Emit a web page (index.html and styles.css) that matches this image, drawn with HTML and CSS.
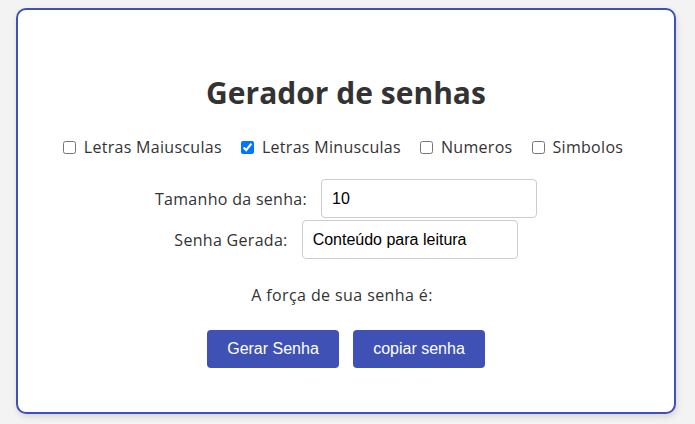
FILE: index.html
```html
<!DOCTYPE html>
<html lang="pt-BR">
<head>
<meta charset="utf-8">
<title>Gerador de senhas</title>
<link rel="stylesheet" href="styles.css">
</head>
<body>
<main class="card">
  <h1 class="title">Gerador de senhas</h1>
  <div class="options">
    <label class="option"><input type="checkbox" class="check">Letras Maiusculas</label>
    <label class="option"><input type="checkbox" class="check" checked>Letras Minusculas</label>
    <label class="option"><input type="checkbox" class="check">Numeros</label>
    <label class="option"><input type="checkbox" class="check">Simbolos</label>
  </div>
  <div class="fields">
    <div class="field">
      <label class="field-label" for="tamanho">Tamanho da senha:</label>
      <input id="tamanho" class="text-input" type="text" value="10">
    </div>
    <div class="field">
      <label class="field-label" for="senha">Senha Gerada:</label>
      <input id="senha" class="text-input" type="text" value="Conteúdo para leitura" readonly>
    </div>
  </div>
  <p class="strength">A força de sua senha é:<span class="strength-value"></span></p>
  <div class="actions">
    <button class="btn" type="button">Gerar Senha</button>
    <button class="btn" type="button">copiar senha</button>
  </div>
</main>
</body>
</html>
```
FILE: styles.css
```css
* {
  box-sizing: border-box;
}

html, body {
  margin: 0;
  height: 100%;
}

body {
  background: #f3f3f3;
  padding: 8px 19px 10px 16px;
  font-family: "Open Sans", "Noto Sans", "Liberation Sans", sans-serif;
  color: #333;
  overflow: hidden;
}

.card {
  height: 406px;
  background: #fff;
  border: 2px solid #3f51b5;
  border-radius: 10px;
  box-shadow: 1px 3px 6px rgba(0, 0, 0, 0.12);
  display: flex;
  flex-direction: column;
  align-items: center;
  padding-top: 63px;
}

.title {
  margin: 0;
  font-size: 30px;
  line-height: 40px;
  font-weight: 700;
  color: #333;
}

.options {
  display: flex;
  align-items: center;
  gap: 19px;
  margin-top: 22px;
  font-size: 16px;
  line-height: 24px;
  letter-spacing: 0.3px;
  margin-right: 6px;
}

.option {
  display: inline-flex;
  align-items: center;
  gap: 8px;
}

.check {
  width: 13px;
  height: 13px;
  margin: 0;
}

.fields {
  display: flex;
  flex-direction: column;
  align-items: center;
  gap: 2px;
  margin-top: 20px;
}

.field {
  display: flex;
  align-items: center;
  gap: 14px;
}

.field-label {
  font-size: 16px;
  line-height: 24px;
  letter-spacing: 0.3px;
}

.text-input {
  width: 216px;
  height: 39px;
  padding: 0 10px;
  border: 1px solid #ccc;
  border-radius: 4px;
  font-family: "Liberation Sans", Arial, sans-serif;
  font-size: 16px;
  color: #000;
  background: #fff;
}

.strength {
  margin: 24px 0 0;
  font-size: 16px;
  line-height: 24px;
  letter-spacing: 0.4px;
}

.strength-value {
  display: inline-block;
  width: 8px;
}

.actions {
  display: flex;
  gap: 14px;
  margin-top: 23px;
}

.btn {
  width: 132px;
  height: 38px;
  border: none;
  border-radius: 4px;
  background: #3f51b5;
  color: #fff;
  font-family: "Liberation Sans", Arial, sans-serif;
  font-size: 16px;
  padding: 0;
}
```
